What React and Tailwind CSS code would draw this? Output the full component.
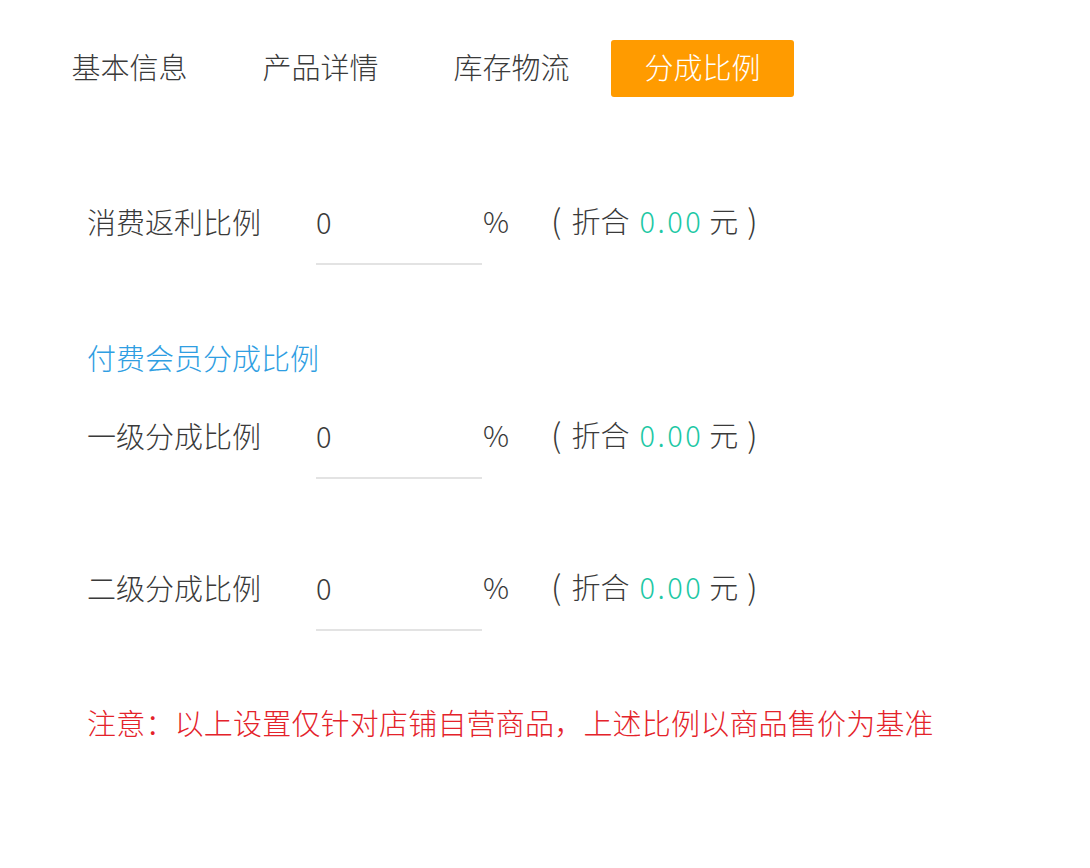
export default function App() {
  const font = { fontFamily: '"Noto Sans CJK SC", "Noto Sans", sans-serif' };
  const tabs = ["基本信息", "产品详情", "库存物流", "分成比例"];
  const Row = ({ label }) => (
    <div className="flex h-[88px] items-center text-[29px] text-[#3a3a3a]">
      <div className="w-[229px] leading-[40px]">{label}</div>
      <div className="flex h-[88px] w-[166px] items-center border-b-2 border-[#e3e3e3] pt-[2px] leading-[40px]">0</div>
      <div className="ml-[1px] leading-[40px] pb-[2px]">%</div>
      <div className="ml-[42px] flex items-center leading-[40px] pb-[2px]">
        <span className="text-[33px]">(</span>
        <span className="ml-[10px]">折合</span>
        <span className="ml-[10px] tracking-[2.5px] text-[#1ec8a5]">0.00</span>
        <span className="ml-[6px]">元</span>
        <span className="ml-[9px] text-[33px]">)</span>
      </div>
    </div>
  );
  return (
    <div className="min-h-[868px] w-[1090px] bg-white font-light" style={font}>
      <div className="flex gap-[8px] pl-[38px] pt-[40px]">
        {tabs.map((t, i) => (
          <div
            key={t}
            className={
              "flex h-[57px] w-[183px] items-center justify-center rounded-[3px] pb-[3px] text-[29px] " +
              (i === 3 ? "bg-[#ff9b00] text-white" : "text-[#3a3a3a]")
            }
          >
            {t}
          </div>
        ))}
      </div>
      <div className="pl-[87px] pt-[80px]">
        <Row label="消费返利比例" />
        <div className="mt-[72px] text-[29px] leading-[40px] text-[#2f9ee2]">付费会员分成比例</div>
        <div className="mt-[14px]">
          <Row label="一级分成比例" />
        </div>
        <div className="mt-[64px]">
          <Row label="二级分成比例" />
        </div>
        <div className="mt-[71px] text-[29px] leading-[40px] tracking-[0.2px] text-[#e4222a]">
          注意：以上设置仅针对店铺自营商品，上述比例以商品售价为基准
        </div>
      </div>
    </div>
  );
}
